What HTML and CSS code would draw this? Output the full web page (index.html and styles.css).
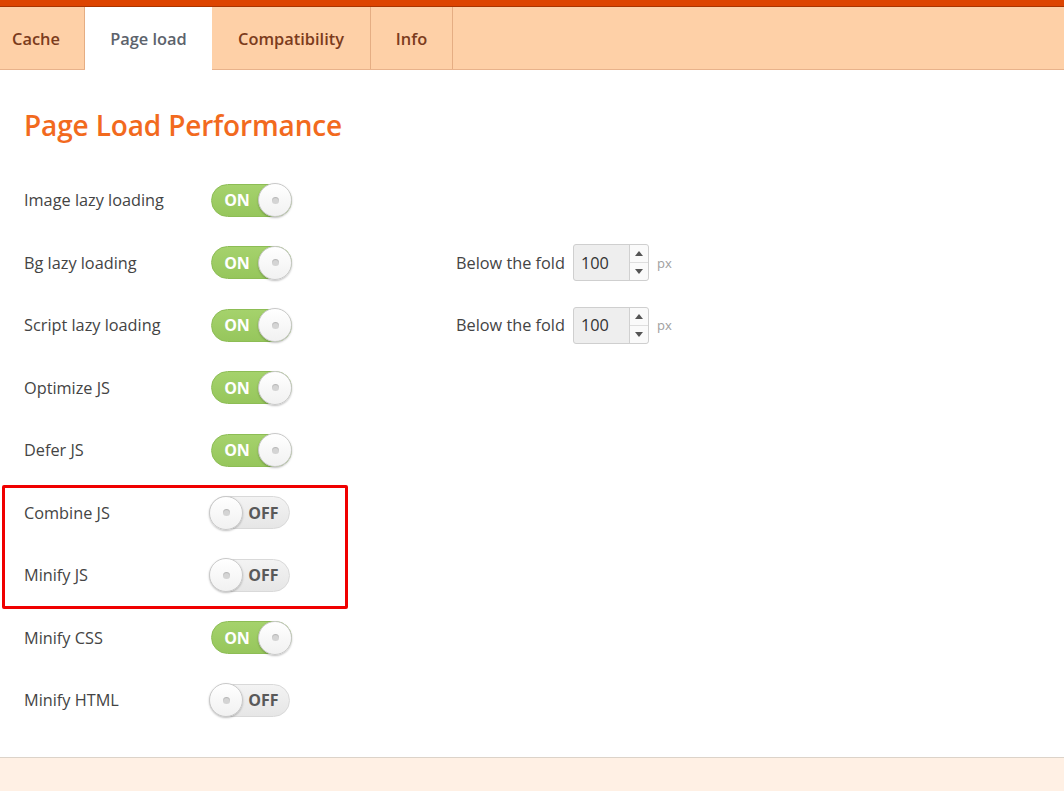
FILE: index.html
```html
<!DOCTYPE html>
<html lang="en">
<head>
<meta charset="utf-8">
<title>Page Load Performance</title>
<link rel="stylesheet" href="styles.css">
</head>
<body>
<div class="topbar"></div>
<nav class="tabs">
  <a class="tab tab-cache">Cache</a>
  <a class="tab tab-page active">Page load</a>
  <a class="tab tab-compat">Compatibility</a>
  <a class="tab tab-info">Info</a>
</nav>
<main class="content">
  <h1 class="title">Page Load Performance</h1>
  <div class="settings">
    <div class="row">
      <span class="label">Image lazy loading</span>
      <span class="toggle on"><span class="t-text">ON</span><span class="knob"></span></span>
    </div>
    <div class="row">
      <span class="label">Bg lazy loading</span>
      <span class="toggle on"><span class="t-text">ON</span><span class="knob"></span></span>
      <span class="extra">Below the fold
        <span class="num"><span class="num-val">100</span><span class="spin"><span class="up"></span><span class="down"></span></span></span>
        <span class="unit">px</span></span>
    </div>
    <div class="row">
      <span class="label">Script lazy loading</span>
      <span class="toggle on"><span class="t-text">ON</span><span class="knob"></span></span>
      <span class="extra">Below the fold
        <span class="num"><span class="num-val">100</span><span class="spin"><span class="up"></span><span class="down"></span></span></span>
        <span class="unit">px</span></span>
    </div>
    <div class="row">
      <span class="label">Optimize JS</span>
      <span class="toggle on"><span class="t-text">ON</span><span class="knob"></span></span>
    </div>
    <div class="row">
      <span class="label">Defer JS</span>
      <span class="toggle on"><span class="t-text">ON</span><span class="knob"></span></span>
    </div>
    <div class="highlight">
      <div class="row">
        <span class="label">Combine JS</span>
        <span class="toggle off"><span class="knob"></span><span class="t-text">OFF</span></span>
      </div>
      <div class="row">
        <span class="label">Minify JS</span>
        <span class="toggle off"><span class="knob"></span><span class="t-text">OFF</span></span>
      </div>
    </div>
    <div class="row">
      <span class="label">Minify CSS</span>
      <span class="toggle on"><span class="t-text">ON</span><span class="knob"></span></span>
    </div>
    <div class="row">
      <span class="label">Minify HTML</span>
      <span class="toggle off"><span class="knob"></span><span class="t-text">OFF</span></span>
    </div>
  </div>
</main>
<footer class="foot"></footer>
</body>
</html>
```

FILE: styles.css
```css
*, *::before, *::after { box-sizing: border-box; }
html, body { margin: 0; padding: 0; }
body {
  font-family: "Open Sans", "DejaVu Sans", sans-serif;
  background: #fff;
  color: #444;
  width: 1064px;
  height: 791px;
  overflow: hidden;
  display: flex;
  flex-direction: column;
}
.topbar {
  height: 7px;
  background: #dd4400;
  border-bottom: 1px solid #a93400;
}
.tabs {
  display: flex;
  height: 63px;
  background: #fed0a7;
  border-bottom: 1px solid #e8b28b;
}
.tab {
  display: flex;
  align-items: center;
  justify-content: center;
  font-size: 16.4px;
  font-weight: 600;
  color: #7b3b1c;
  border-right: 1px solid #e5ad83;
  height: 62px;
}
.tab-cache { width: 85px; justify-content: flex-start; padding-left: 12px; }
.tab-page { width: 127px; }
.tab-compat { width: 159px; }
.tab-info { width: 82px; }
.tab.active {
  background: #fff;
  color: #5c636c;
  height: 63px;
  border-right: none;
}
.content {
  flex: 1;
  padding: 0 0 0 24px;
  border-bottom: 1px solid #dcd3c9;
}
.title {
  margin: 36px 0 25px;
  font-size: 28px;
  line-height: 38px;
  font-weight: 600;
  color: #f26a1e;
  letter-spacing: -0.15px;
}
.settings { display: flex; flex-direction: column; }
.row {
  display: grid;
  grid-template-columns: 187px 245px auto;
  align-items: center;
  height: 62.5px;
}
.label {
  font-size: 16.3px;
  color: #444;
}
.toggle {
  display: flex;
  align-items: center;
  width: 81px;
  height: 33px;
  border-radius: 17px;
}
.toggle.on {
  background: linear-gradient(#a5d26c, #96c65c);
  border: 1px solid #8dbd55;
}
.toggle.off {
  background: linear-gradient(#f3f3f3, #e6e6e6);
  border: 1px solid #d9d9d9;
  margin-left: -2px;
}
.t-text {
  font-size: 16px;
  font-weight: 700;
  flex: 1;
  text-align: center;
}
.toggle.on .t-text { color: #fff; padding-left: 3px; }
.toggle.off .t-text { color: #595959; padding-right: 4px; }
.knob {
  width: 34px;
  height: 34px;
  border-radius: 50%;
  background: linear-gradient(#ffffff, #f1f1f1);
  border: 1px solid #c9c9c9;
  box-shadow: 0 1px 2px rgba(0,0,0,0.25);
  display: flex;
  align-items: center;
  justify-content: center;
  margin: -1px;
}
.knob::after {
  content: "";
  width: 7px;
  height: 7px;
  border-radius: 50%;
  background: #d4d4d4;
  box-shadow: inset 0 1px 1px rgba(0,0,0,0.15);
}
.extra {
  display: flex;
  align-items: center;
  font-size: 16.3px;
  color: #444;
}
.num {
  display: flex;
  margin-left: 8px;
  width: 76px;
  height: 37px;
  border: 1px solid #cfcfcf;
  border-radius: 3px;
  background: #eeeeee;
}
.num-val {
  flex: 1;
  display: flex;
  align-items: center;
  padding-left: 7px;
  font-size: 16.3px;
  color: #333;
}
.spin {
  width: 19px;
  display: flex;
  flex-direction: column;
  border-left: 1px solid #d0d0d0;
  background: #fafafa;
  border-radius: 0 3px 3px 0;
}
.up, .down {
  flex: 1;
  display: flex;
  align-items: center;
  justify-content: center;
}
.up { border-bottom: 1px solid #dedede; }
.up::after {
  content: "";
  border-left: 4px solid transparent;
  border-right: 4px solid transparent;
  border-bottom: 5px solid #555;
}
.down::after {
  content: "";
  border-left: 4px solid transparent;
  border-right: 4px solid transparent;
  border-top: 5px solid #555;
}
.unit {
  margin-left: 8px;
  font-size: 13px;
  color: #a0a0a0;
}
.highlight {
  position: relative;
}
.highlight::before {
  content: "";
  position: absolute;
  left: -22px;
  top: 3px;
  width: 346px;
  height: 124px;
  border: 3px solid #f00000;
  border-radius: 2px;
  pointer-events: none;
}
.foot {
  height: 33px;
  background: #fff0e4;
}
```
